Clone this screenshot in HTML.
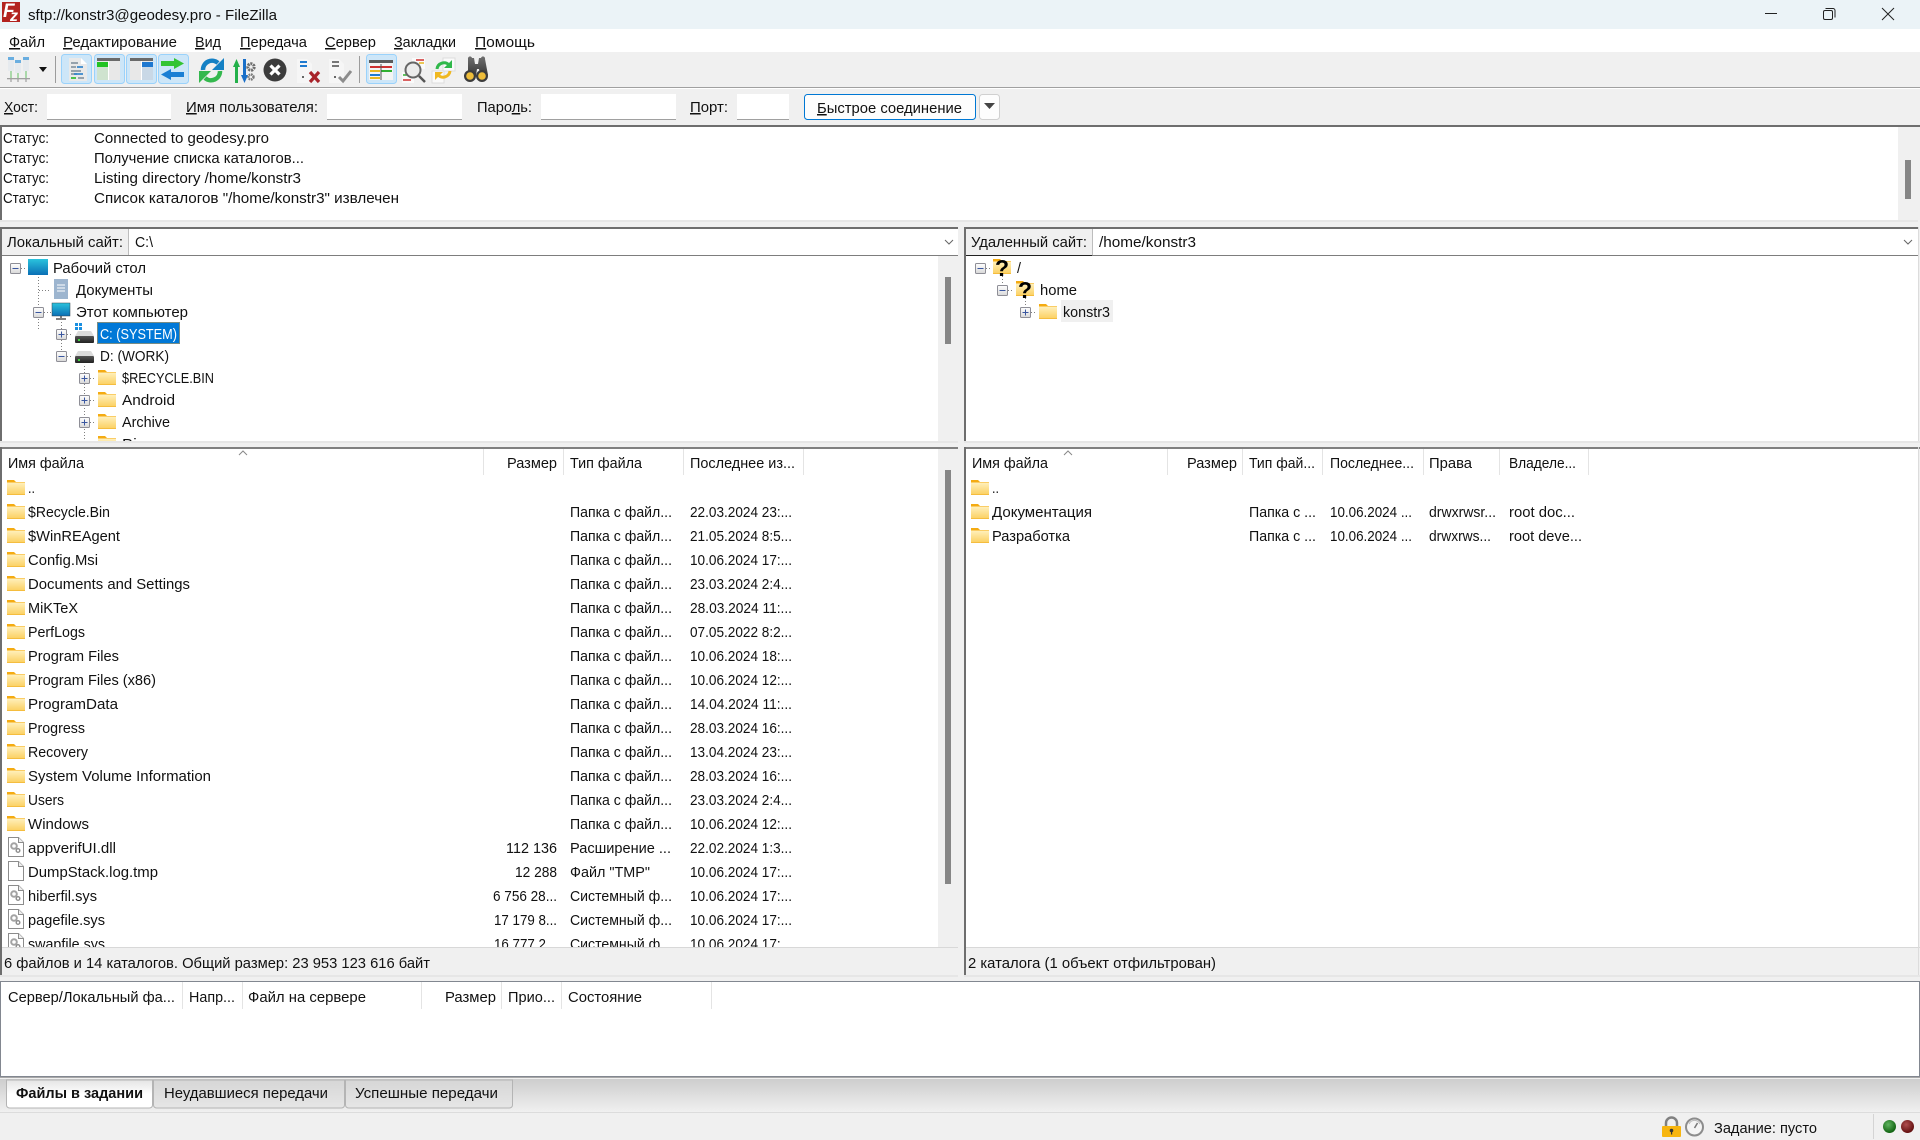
<!DOCTYPE html>
<html lang="ru"><head><meta charset="utf-8"><title>FileZilla</title>
<style>
html,body{margin:0;padding:0;background:#f0f0f0;overflow:hidden}
svg{display:block}
text{font-family:"Liberation Sans","DejaVu Sans",sans-serif;font-size:15px;fill:#111}
.u{text-decoration:underline}
</style></head><body>
<svg width="1920" height="1140" viewBox="0 0 1920 1140" xmlns="http://www.w3.org/2000/svg">
<defs>
<linearGradient id="fg" x1="0" y1="0" x2="0" y2="1"><stop offset="0" stop-color="#fff0bd"/><stop offset="1" stop-color="#fbcf5e"/></linearGradient>
<linearGradient id="ex" x1="0" y1="0" x2="0" y2="1"><stop offset="0" stop-color="#fff"/><stop offset="1" stop-color="#d8d8d8"/></linearGradient>
<linearGradient id="band" x1="0" y1="0" x2="0" y2="1"><stop offset="0" stop-color="#cdcdcd"/><stop offset="1" stop-color="#f0f0f0"/></linearGradient>
<linearGradient id="tabA" x1="0" y1="0" x2="0" y2="1"><stop offset="0" stop-color="#e4e4e4"/><stop offset=".5" stop-color="#fff"/><stop offset="1" stop-color="#fff"/></linearGradient>
<linearGradient id="tabI" x1="0" y1="0" x2="0" y2="1"><stop offset="0" stop-color="#d6d6d6"/><stop offset="1" stop-color="#e6e6e6"/></linearGradient>
<linearGradient id="sc" x1="0" y1="0" x2="0" y2="1"><stop offset="0" stop-color="#2ac3dd"/><stop offset="1" stop-color="#0a6fb5"/></linearGradient>
<linearGradient id="dr" x1="0" y1="0" x2="0" y2="1"><stop offset="0" stop-color="#555"/><stop offset="1" stop-color="#222"/></linearGradient>
<linearGradient id="bn" x1="0" y1="0" x2="0" y2="1"><stop offset="0" stop-color="#707070"/><stop offset="1" stop-color="#3a3a3a"/></linearGradient>
<radialGradient id="gl" cx=".4" cy=".35" r=".7"><stop offset="0" stop-color="#5fb45f"/><stop offset="1" stop-color="#0a5c0a"/></radialGradient>
<radialGradient id="rl" cx=".4" cy=".35" r=".7"><stop offset="0" stop-color="#b05050"/><stop offset="1" stop-color="#5c0a0a"/></radialGradient>
<clipPath id="cT"><rect x="0" y="256" width="938" height="185"/></clipPath>
<clipPath id="cL"><rect x="0" y="449" width="938" height="498"/></clipPath>
<symbol id="fo" width="18" height="15" viewBox="0 0 18 15"><path d="M0 0h7l2 2h9v3H0z" fill="#f4ab12"/><rect y="2.5" width="18" height="12.5" fill="url(#fg)"/><rect y="14" width="18" height="1" fill="#f5bd3e"/></symbol>
<symbol id="fi" width="16" height="20" viewBox="0 0 16 20"><path d="M.5.5h10l5 5v14H.5z" fill="#fff" stroke="#8c8c8c"/><path d="M10.5.5v5h5" fill="#eee" stroke="#8c8c8c"/></symbol>
<symbol id="fg2" width="16" height="20" viewBox="0 0 16 20"><path d="M.5.5h10l5 5v14H.5z" fill="#fff" stroke="#8c8c8c"/><path d="M10.5.5v5h5" fill="#eee" stroke="#8c8c8c"/><circle cx="6" cy="9" r="2.8" fill="none" stroke="#a3a3a3" stroke-width="2"/><circle cx="10" cy="13.5" r="1.8" fill="none" stroke="#8d8d8d" stroke-width="1.4"/></symbol>
<symbol id="em" width="11" height="11" viewBox="0 0 11 11"><rect x=".5" y=".5" width="10" height="10" rx="1" fill="url(#ex)" stroke="#8e8e96"/><path d="M2.5 5.5h6" stroke="#3a57a0"/></symbol>
<symbol id="ep" width="11" height="11" viewBox="0 0 11 11"><rect x=".5" y=".5" width="10" height="10" rx="1" fill="url(#ex)" stroke="#8e8e96"/><path d="M2.5 5.5h6M5.5 2.5v6" stroke="#3a57a0"/></symbol>
<symbol id="dv" width="19" height="12" viewBox="0 0 19 12"><path d="M3 0h13l3 5H0z" fill="#dcdcdc"/><rect y="5" width="19" height="7" rx="1" fill="url(#dr)"/><rect x="3" y="8" width="2" height="2" fill="#3ecf3e"/></symbol>
</defs>

<!-- frame backgrounds -->
<rect width="1920" height="1140" fill="#f0f0f0"/>
<rect width="1920" height="29" fill="#ebf3f7"/>
<rect y="29" width="1920" height="23" fill="#fff"/>
<rect y="87" width="1920" height="1" fill="#a0a0a0"/>
<rect y="88" width="1920" height="1" fill="#fff"/>
<rect y="125" width="1920" height="2" fill="#6e6e6e"/>
<rect y="127" width="1918" height="93" fill="#fff"/>
<rect y="127" width="2" height="93" fill="#6e6e6e"/>
<rect x="1898" y="127" width="20" height="93" fill="#f0f0f0"/>
<rect x="1905" y="160" width="6" height="39" fill="#868686"/>
<rect y="220" width="1918" height="2" fill="#e6e6e6"/>

<!-- title bar -->
<rect x="2" y="2" width="18" height="20" fill="#b3231f"/>
<text x="3" y="17" style="font-size:19px;font-weight:bold;font-style:italic;fill:#fff">F</text>
<text x="10" y="21" style="font-size:16px;font-weight:bold;font-style:italic;fill:#fff">z</text>
<text x="28" y="20" textLength="249" lengthAdjust="spacingAndGlyphs">sftp://konstr3@geodesy.pro - FileZilla</text>
<path d="M1765 13.5h12" stroke="#222" stroke-width="1"/>
<path d="M1825.5 8.5h7.5a2 2 0 0 1 2 2v7" fill="none" stroke="#222"/><rect x="1823.5" y="10.5" width="9" height="9" rx="1.5" fill="none" stroke="#222"/>
<path d="M1882 8l12 12M1894 8l-12 12" stroke="#222"/>

<!-- menu -->
<g>
<text x="9" y="47" textLength="36" lengthAdjust="spacingAndGlyphs"><tspan class="u">Ф</tspan>айл</text>
<text x="63" y="47" textLength="114" lengthAdjust="spacingAndGlyphs"><tspan class="u">Р</tspan>едактирование</text>
<text x="195" y="47" textLength="26" lengthAdjust="spacingAndGlyphs"><tspan class="u">В</tspan>ид</text>
<text x="240" y="47" textLength="67" lengthAdjust="spacingAndGlyphs"><tspan class="u">П</tspan>ередача</text>
<text x="325" y="47" textLength="51" lengthAdjust="spacingAndGlyphs"><tspan class="u">С</tspan>ервер</text>
<text x="394" y="47" textLength="62" lengthAdjust="spacingAndGlyphs"><tspan class="u">З</tspan>акладки</text>
<text x="475" y="47" textLength="60" lengthAdjust="spacingAndGlyphs"><tspan class="u">П</tspan>омощь</text>
</g>

<!-- toolbar -->
<g>
<!-- site manager -->
<rect x="8" y="57" width="6" height="14" fill="#e6eaee"/><rect x="8" y="57" width="6" height="3" fill="#6aaee0"/>
<rect x="15" y="60" width="6" height="13" fill="#e6eaee"/><rect x="15" y="60" width="6" height="3" fill="#6aaee0"/>
<rect x="23" y="57" width="6" height="14" fill="#e6eaee"/><rect x="23" y="57" width="6" height="3" fill="#6aaee0"/>
<path d="M11 71v7M18 73v5M26 71v7" stroke="#7cc87c" stroke-width="1.2"/>
<rect x="7" y="78" width="23" height="1.3" fill="#a0a0a0"/><path d="M11 79v3M18 79v3M26 79v3" stroke="#a0a0a0" stroke-width="1.2"/>
<path d="M39 67h8l-4 5z" fill="#111"/>
<rect x="55" y="56" width="1" height="27" fill="#9c9c9c"/>
<!-- highlighted buttons -->
<rect x="61.500" y="54.500" width="30" height="29" rx="3" fill="#cde6f8" stroke="#9ad2fb"/>
<rect x="94.500" y="54.500" width="30" height="29" rx="3" fill="#cde6f8" stroke="#9ad2fb"/>
<rect x="126.500" y="54.500" width="30" height="29" rx="3" fill="#cde6f8" stroke="#9ad2fb"/>
<rect x="158.500" y="54.500" width="30" height="29" rx="3" fill="#cde6f8" stroke="#9ad2fb"/>
<!-- log doc -->
<path d="M69 58h12l6 6v17H69z" fill="#e9e9e9"/><path d="M81 58v6h6z" fill="#fff"/>
<path d="M71 63h7M71 67h5M71 71h10M71 74h6M78 78h6" stroke="#7a8a98" stroke-width="1.6"/><path d="M77 67h6M74 74h9" stroke="#1a78c8" stroke-width="1.6"/><path d="M71 78h5" stroke="#25b825" stroke-width="1.6"/>
<!-- local tree -->
<rect x="97" y="58" width="23" height="22" fill="#e8e8e8"/><rect x="97" y="58" width="23" height="3" fill="#6a6a6a"/><rect x="97" y="62" width="11" height="5" fill="#22c322"/><rect x="97" y="67" width="11" height="13" fill="#cfe3cf"/><rect x="108" y="61" width="1" height="19" fill="#fff"/>
<!-- remote tree -->
<rect x="130" y="58" width="23" height="22" fill="#e8e8e8"/><rect x="130" y="58" width="23" height="3" fill="#6a6a6a"/><rect x="142" y="62" width="11" height="5" fill="#1e78d0"/><rect x="142" y="67" width="11" height="13" fill="#c9d8e6"/><rect x="141" y="61" width="1" height="19" fill="#fff"/>
<!-- queue arrows -->
<path d="M161 61h13v-3l10 5.500-10 5.500v-3h-13z" fill="#33c433"/>
<path d="M184 72h-13v-3l-10 5.500 10 5.500v-3h13z" fill="#1a7fd4"/>
<!-- refresh -->
<path d="M203 70a9 9 0 0 1 15-7" fill="none" stroke="#1480c4" stroke-width="4.500"/><path d="M224 58v12h-12z" fill="#1480c4"/>
<path d="M220 71a9 9 0 0 1-15 7" fill="none" stroke="#34b84e" stroke-width="4.500"/><path d="M199 83V71h12z" fill="#34b84e"/>
<!-- sync -->
<path d="M233 67l3.500-8 3.500 8h-2v16h-3V67z" fill="#23b04a"/>
<path d="M241 75l3.500 8 3.500-8h-2V59h-3v16z" fill="#1a6fc8"/>
<circle cx="251" cy="67" r="3.200" fill="none" stroke="#6e6e6e" stroke-width="3" stroke-dasharray="2 .8"/><circle cx="251" cy="77" r="2.500" fill="none" stroke="#7c7c7c" stroke-width="2.400" stroke-dasharray="1.600 .7"/>
<!-- cancel -->
<circle cx="275" cy="70" r="11.500" fill="#3c3c3c"/><path d="M270.500 65.500l9 9M279.500 65.500l-9 9" stroke="#fff" stroke-width="3.200"/>
<!-- delete -->
<path d="M297 59h10l5 5v19h-15z" fill="#f6f6f6"/><path d="M300 62h7M300 66h7" stroke="#1f7bd0" stroke-width="2"/><rect x="302" y="76" width="2" height="2" fill="#666"/>
<path d="M310 72l9 10M319 72l-9 10" stroke="#a8232a" stroke-width="3.200"/>
<!-- check -->
<path d="M329 59h10l5 5v19h-15z" fill="#f6f6f6"/><path d="M332 62h7M332 66h7" stroke="#777" stroke-width="2"/><rect x="334" y="76" width="2" height="2" fill="#666"/>
<path d="M339 77l4 4 8-10" fill="none" stroke="#8c8c8c" stroke-width="3"/>
<rect x="359" y="56" width="1" height="27" fill="#9c9c9c"/>
<!-- filter -->
<rect x="366.500" y="54.500" width="30" height="29" rx="3" fill="#cde6f8" stroke="#9ad2fb"/>
<rect x="369" y="60" width="24" height="20" fill="#f4f4f4"/><rect x="369" y="60" width="24" height="3" fill="#5a5a5a"/>
<path d="M370 67h22" stroke="#cf3030" stroke-width="2"/><path d="M370 71h10" stroke="#e8b820" stroke-width="2"/><path d="M381 71h11" stroke="#30b030" stroke-width="2"/><path d="M370 75h10" stroke="#1f7bd0" stroke-width="2"/><path d="M370 78h10" stroke="#e8b820" stroke-width="2"/><path d="M381 64v16" stroke="#555"/>
<!-- search -->
<rect x="412" y="58" width="13" height="11" fill="#fafafa"/><path d="M416 60h8" stroke="#cf3030" stroke-width="1.500"/><path d="M419 63h5" stroke="#e8b820" stroke-width="1.500"/>
<rect x="402" y="72" width="12" height="11" fill="#fafafa"/><path d="M403 75h6" stroke="#30b030" stroke-width="1.500"/><path d="M403 80h8" stroke="#cf3030" stroke-width="1.500"/>
<circle cx="413" cy="70" r="7.500" fill="#ececec" stroke="#666" stroke-width="2"/><path d="M419 76l6 6" stroke="#555" stroke-width="2.500"/>
<!-- sync browse -->
<rect x="443" y="58" width="12" height="13" fill="#fafafa" stroke="#ddd"/><rect x="432" y="71" width="12" height="12" fill="#fafafa" stroke="#ddd"/>
<path d="M437 69a7 7 0 0 1 12-4" fill="none" stroke="#30b84a" stroke-width="3"/><path d="M452 60v8h-8z" fill="#30b84a"/>
<path d="M450 71a7 7 0 0 1-12 4" fill="none" stroke="#f0b820" stroke-width="3"/><path d="M435 80v-8h8z" fill="#f0b820"/>
<!-- binoculars -->
<path d="M468 59a2 2 0 0 1 4-1h2l1 6h3l1-6h2a2 2 0 0 1 4 1l3 16h-8l-1-6h-2l-1 6h-8z" fill="url(#bn)"/>
<circle cx="470" cy="76" r="6" fill="#3c3c3c"/><circle cx="482" cy="76" r="6" fill="#3c3c3c"/>
<circle cx="470" cy="76" r="3.800" fill="#eebd3a"/><circle cx="482" cy="76" r="3.800" fill="#eebd3a"/>
</g>

<!-- quick connect -->
<g>
<text x="4" y="112" textLength="34" lengthAdjust="spacingAndGlyphs"><tspan class="u">Х</tspan>ост:</text>
<rect x="47" y="94" width="124" height="26" fill="#fff"/><rect x="47" y="119" width="124" height="1" fill="#a0a0a0"/>
<text x="186" y="112" textLength="132" lengthAdjust="spacingAndGlyphs"><tspan class="u">И</tspan>мя пользователя:</text>
<rect x="327" y="94" width="135" height="26" fill="#fff"/><rect x="327" y="119" width="135" height="1" fill="#a0a0a0"/>
<text x="477" y="112" textLength="55" lengthAdjust="spacingAndGlyphs">Паро<tspan class="u">л</tspan>ь:</text>
<rect x="541" y="94" width="135" height="26" fill="#fff"/><rect x="541" y="119" width="135" height="1" fill="#a0a0a0"/>
<text x="690" y="112" textLength="38" lengthAdjust="spacingAndGlyphs"><tspan class="u">П</tspan>орт:</text>
<rect x="737" y="94" width="52" height="26" fill="#fff"/><rect x="737" y="119" width="52" height="1" fill="#a0a0a0"/>
<rect x="804.500" y="94.500" width="171" height="25" rx="3" fill="#fdfdfd" stroke="#0078d4"/>
<text x="817" y="113" textLength="145" lengthAdjust="spacingAndGlyphs"><tspan class="u">Б</tspan>ыстрое соединение</text>
<rect x="979.500" y="94.500" width="20" height="25" rx="3" fill="#fdfdfd" stroke="#d0d0d0"/>
<path d="M984 103h11l-5.500 6z" fill="#444"/>
</g>

<!-- log text -->
<g>
<text x="3" y="143" textLength="46" lengthAdjust="spacingAndGlyphs">Статус:</text><text x="94" y="143" textLength="175" lengthAdjust="spacingAndGlyphs">Connected to geodesy.pro</text>
<text x="3" y="163" textLength="46" lengthAdjust="spacingAndGlyphs">Статус:</text><text x="94" y="163" textLength="210" lengthAdjust="spacingAndGlyphs">Получение списка каталогов...</text>
<text x="3" y="183" textLength="46" lengthAdjust="spacingAndGlyphs">Статус:</text><text x="94" y="183" textLength="207" lengthAdjust="spacingAndGlyphs">Listing directory /home/konstr3</text>
<text x="3" y="203" textLength="46" lengthAdjust="spacingAndGlyphs">Статус:</text><text x="94" y="203" textLength="305" lengthAdjust="spacingAndGlyphs">Список каталогов "/home/konstr3" извлечен</text>
</g>

<!-- local panel frame -->
<rect y="227" width="958" height="2" fill="#6e6e6e"/>
<rect y="229" width="958" height="26" fill="#fff"/>
<rect x="2" y="229" width="126" height="26" fill="#f0f0f0"/><rect x="128" y="229" width="1" height="26" fill="#bdbdbd"/>
<rect y="255" width="958" height="1" fill="#7d7d7d"/>
<text x="7" y="247" textLength="116" lengthAdjust="spacingAndGlyphs">Локальный сайт:</text>
<text x="135" y="247" textLength="18" lengthAdjust="spacingAndGlyphs">C:\</text>
<path d="M945 240l4 4 4-4" fill="none" stroke="#666"/>
<rect y="256" width="958" height="185" fill="#fff"/>
<rect x="938" y="256" width="20" height="185" fill="#f0f0f0"/><rect x="945" y="277" width="6" height="67" fill="#868686"/>
<rect y="441" width="958" height="2" fill="#e6e6e6"/>
<rect y="447" width="958" height="2" fill="#808080"/>
<rect y="449" width="958" height="498" fill="#fff"/>
<rect x="938" y="449" width="20" height="498" fill="#f0f0f0"/><rect x="945" y="470" width="6" height="414" fill="#868686"/>
<rect y="947" width="958" height="1" fill="#d8d8d8"/>
<rect y="227" width="2" height="214" fill="#6e6e6e"/><rect y="447" width="2" height="528" fill="#6e6e6e"/>
<rect y="975" width="958" height="2" fill="#e6e6e6"/>

<!-- remote panel frame -->
<rect x="964" y="227" width="954" height="2" fill="#6e6e6e"/>
<rect x="964" y="229" width="954" height="26" fill="#fff"/>
<rect x="966" y="229" width="126" height="26" fill="#f0f0f0"/><rect x="1092" y="229" width="1" height="26" fill="#bdbdbd"/>
<rect x="964" y="255" width="954" height="1" fill="#7d7d7d"/><rect x="966" y="255" width="126" height="1" fill="#222"/>
<text x="971" y="247" textLength="116" lengthAdjust="spacingAndGlyphs">Удаленный сайт:</text>
<text x="1099" y="247" textLength="97" lengthAdjust="spacingAndGlyphs">/home/konstr3</text>
<path d="M1904 240l4 4 4-4" fill="none" stroke="#666"/>
<rect x="964" y="256" width="954" height="185" fill="#fff"/>
<rect x="964" y="441" width="956" height="2" fill="#e6e6e6"/>
<rect x="964" y="447" width="956" height="2" fill="#808080"/>
<rect x="964" y="449" width="954" height="498" fill="#fff"/>
<rect x="964" y="947" width="956" height="1" fill="#d8d8d8"/>
<rect x="964" y="227" width="2" height="214" fill="#6e6e6e"/><rect x="964" y="447" width="2" height="528" fill="#6e6e6e"/>
<rect x="1918" y="227" width="1" height="214" fill="#dcdcdc"/><rect x="1918" y="447" width="1" height="528" fill="#dcdcdc"/>
<rect x="964" y="975" width="956" height="2" fill="#e6e6e6"/>

<!-- local tree -->
<g clip-path="url(#cT)">
<g stroke="#808080" stroke-dasharray="1 2" fill="none">
<path d="M21 268.500h6M38.500 277v53M39 290.500h12M44 312.500h7M61.500 322v36M67 334.500h6M67 356.500h6M84.500 366v78M90 378.500h6M90 400.500h6M90 422.500h6"/>
</g>
<use href="#em" x="10" y="263"/>
<rect x="28" y="259" width="20" height="16" fill="url(#sc)"/>
<text x="53" y="273" textLength="93" lengthAdjust="spacingAndGlyphs">Рабочий стол</text>
<path d="M54 279h14v20H54z" fill="#9db5cf"/><path d="M57 285h8M57 288h8M57 291h8" stroke="#fff"/>
<text x="76" y="295" textLength="77" lengthAdjust="spacingAndGlyphs">Документы</text>
<use href="#em" x="33" y="307"/>
<rect x="52" y="303" width="18" height="13" fill="url(#sc)" stroke="#33424d" stroke-width=".5"/><path d="M61 316v2M56 319h10" stroke="#555" stroke-width="1.500"/>
<text x="76" y="317" textLength="112" lengthAdjust="spacingAndGlyphs">Этот компьютер</text>
<use href="#ep" x="56" y="329"/>
<path d="M75 323h3v3h-3zM79 323h3v3h-3zM75 327h3v3h-3zM79 327h3v3h-3z" fill="#1a8fe0"/>
<use href="#dv" x="75" y="331"/>
<rect x="97" y="322" width="83" height="22" fill="#0078d7"/>
<rect x="97.500" y="322.500" width="82" height="21" fill="none" stroke="#f0a030" stroke-dasharray="1 1"/>
<text x="100" y="339" textLength="77" lengthAdjust="spacingAndGlyphs" style="fill:#fff">C: (SYSTEM)</text>
<use href="#em" x="56" y="351"/>
<use href="#dv" x="75" y="351"/>
<text x="100" y="361" textLength="69" lengthAdjust="spacingAndGlyphs">D: (WORK)</text>
<use href="#ep" x="79" y="373"/><use href="#fo" x="98" y="370"/><text x="122" y="383" textLength="92" lengthAdjust="spacingAndGlyphs">$RECYCLE.BIN</text>
<use href="#ep" x="79" y="395"/><use href="#fo" x="98" y="392"/><text x="122" y="405" textLength="53" lengthAdjust="spacingAndGlyphs">Android</text>
<use href="#ep" x="79" y="417"/><use href="#fo" x="98" y="414"/><text x="122" y="427" textLength="48" lengthAdjust="spacingAndGlyphs">Archive</text>
<use href="#fo" x="98" y="436"/><text x="122" y="449" textLength="24" lengthAdjust="spacingAndGlyphs">Bin</text>
</g>

<!-- remote tree -->
<g>
<g stroke="#808080" stroke-dasharray="1 2" fill="none"><path d="M986 268.500h6M1002.500 276v9M1008 290.500h6M1025.500 298v9M1031 312.500h6"/></g>
<use href="#em" x="975" y="263"/>
<use href="#fo" x="993" y="259"/>
<text x="1002" y="276" text-anchor="middle" style="font-size:23px;font-weight:bold;fill:#000">?</text>
<text x="1017" y="273" textLength="4" lengthAdjust="spacingAndGlyphs">/</text>
<use href="#em" x="997" y="285"/>
<use href="#fo" x="1016" y="281"/>
<text x="1025" y="298" text-anchor="middle" style="font-size:23px;font-weight:bold;fill:#000">?</text>
<text x="1040" y="295" textLength="37" lengthAdjust="spacingAndGlyphs">home</text>
<use href="#ep" x="1020" y="307"/>
<use href="#fo" x="1039" y="304"/>
<rect x="1061" y="300" width="52" height="22" fill="#f0f0f0"/>
<text x="1063" y="317" textLength="47" lengthAdjust="spacingAndGlyphs">konstr3</text>
</g>

<!-- local list header -->
<g fill="#e4e4e4">
<rect x="483" y="449" width="1" height="26"/><rect x="563" y="449" width="1" height="26"/><rect x="683" y="449" width="1" height="26"/><rect x="803" y="449" width="1" height="26"/>
</g>
<path d="M239 455l4-4 4 4" fill="none" stroke="#888"/>
<text x="8" y="468" textLength="76" lengthAdjust="spacingAndGlyphs">Имя файла</text>
<text x="507" y="468" textLength="50" lengthAdjust="spacingAndGlyphs">Размер</text>
<text x="570" y="468" textLength="72" lengthAdjust="spacingAndGlyphs">Тип файла</text>
<text x="690" y="468" textLength="105" lengthAdjust="spacingAndGlyphs">Последнее из...</text>

<!-- local list rows -->
<g clip-path="url(#cL)">
<use href="#fo" x="7" y="480"/><text x="28" y="493" textLength="7" lengthAdjust="spacingAndGlyphs">..</text>
<use href="#fo" x="7" y="504"/><text x="28" y="517" textLength="82" lengthAdjust="spacingAndGlyphs">$Recycle.Bin</text><text x="570" y="517" textLength="102" lengthAdjust="spacingAndGlyphs">Папка с файл...</text><text x="690" y="517" textLength="102" lengthAdjust="spacingAndGlyphs">22.03.2024 23:...</text>
<use href="#fo" x="7" y="528"/><text x="28" y="541" textLength="92" lengthAdjust="spacingAndGlyphs">$WinREAgent</text><text x="570" y="541" textLength="102" lengthAdjust="spacingAndGlyphs">Папка с файл...</text><text x="690" y="541" textLength="102" lengthAdjust="spacingAndGlyphs">21.05.2024 8:5...</text>
<use href="#fo" x="7" y="552"/><text x="28" y="565" textLength="70" lengthAdjust="spacingAndGlyphs">Config.Msi</text><text x="570" y="565" textLength="102" lengthAdjust="spacingAndGlyphs">Папка с файл...</text><text x="690" y="565" textLength="102" lengthAdjust="spacingAndGlyphs">10.06.2024 17:...</text>
<use href="#fo" x="7" y="576"/><text x="28" y="589" textLength="162" lengthAdjust="spacingAndGlyphs">Documents and Settings</text><text x="570" y="589" textLength="102" lengthAdjust="spacingAndGlyphs">Папка с файл...</text><text x="690" y="589" textLength="102" lengthAdjust="spacingAndGlyphs">23.03.2024 2:4...</text>
<use href="#fo" x="7" y="600"/><text x="28" y="613" textLength="50" lengthAdjust="spacingAndGlyphs">MiKTeX</text><text x="570" y="613" textLength="102" lengthAdjust="spacingAndGlyphs">Папка с файл...</text><text x="690" y="613" textLength="102" lengthAdjust="spacingAndGlyphs">28.03.2024 11:...</text>
<use href="#fo" x="7" y="624"/><text x="28" y="637" textLength="57" lengthAdjust="spacingAndGlyphs">PerfLogs</text><text x="570" y="637" textLength="102" lengthAdjust="spacingAndGlyphs">Папка с файл...</text><text x="690" y="637" textLength="102" lengthAdjust="spacingAndGlyphs">07.05.2022 8:2...</text>
<use href="#fo" x="7" y="648"/><text x="28" y="661" textLength="91" lengthAdjust="spacingAndGlyphs">Program Files</text><text x="570" y="661" textLength="102" lengthAdjust="spacingAndGlyphs">Папка с файл...</text><text x="690" y="661" textLength="102" lengthAdjust="spacingAndGlyphs">10.06.2024 18:...</text>
<use href="#fo" x="7" y="672"/><text x="28" y="685" textLength="128" lengthAdjust="spacingAndGlyphs">Program Files (x86)</text><text x="570" y="685" textLength="102" lengthAdjust="spacingAndGlyphs">Папка с файл...</text><text x="690" y="685" textLength="102" lengthAdjust="spacingAndGlyphs">10.06.2024 12:...</text>
<use href="#fo" x="7" y="696"/><text x="28" y="709" textLength="90" lengthAdjust="spacingAndGlyphs">ProgramData</text><text x="570" y="709" textLength="102" lengthAdjust="spacingAndGlyphs">Папка с файл...</text><text x="690" y="709" textLength="102" lengthAdjust="spacingAndGlyphs">14.04.2024 11:...</text>
<use href="#fo" x="7" y="720"/><text x="28" y="733" textLength="57" lengthAdjust="spacingAndGlyphs">Progress</text><text x="570" y="733" textLength="102" lengthAdjust="spacingAndGlyphs">Папка с файл...</text><text x="690" y="733" textLength="102" lengthAdjust="spacingAndGlyphs">28.03.2024 16:...</text>
<use href="#fo" x="7" y="744"/><text x="28" y="757" textLength="60" lengthAdjust="spacingAndGlyphs">Recovery</text><text x="570" y="757" textLength="102" lengthAdjust="spacingAndGlyphs">Папка с файл...</text><text x="690" y="757" textLength="102" lengthAdjust="spacingAndGlyphs">13.04.2024 23:...</text>
<use href="#fo" x="7" y="768"/><text x="28" y="781" textLength="183" lengthAdjust="spacingAndGlyphs">System Volume Information</text><text x="570" y="781" textLength="102" lengthAdjust="spacingAndGlyphs">Папка с файл...</text><text x="690" y="781" textLength="102" lengthAdjust="spacingAndGlyphs">28.03.2024 16:...</text>
<use href="#fo" x="7" y="792"/><text x="28" y="805" textLength="36" lengthAdjust="spacingAndGlyphs">Users</text><text x="570" y="805" textLength="102" lengthAdjust="spacingAndGlyphs">Папка с файл...</text><text x="690" y="805" textLength="102" lengthAdjust="spacingAndGlyphs">23.03.2024 2:4...</text>
<use href="#fo" x="7" y="816"/><text x="28" y="829" textLength="61" lengthAdjust="spacingAndGlyphs">Windows</text><text x="570" y="829" textLength="102" lengthAdjust="spacingAndGlyphs">Папка с файл...</text><text x="690" y="829" textLength="102" lengthAdjust="spacingAndGlyphs">10.06.2024 12:...</text>
<use href="#fg2" x="8" y="837"/><text x="28" y="853" textLength="88" lengthAdjust="spacingAndGlyphs">appverifUI.dll</text><text x="506" y="853" textLength="51" lengthAdjust="spacingAndGlyphs">112 136</text><text x="570" y="853" textLength="101" lengthAdjust="spacingAndGlyphs">Расширение ...</text><text x="690" y="853" textLength="102" lengthAdjust="spacingAndGlyphs">22.02.2024 1:3...</text>
<use href="#fi" x="8" y="861"/><text x="28" y="877" textLength="130" lengthAdjust="spacingAndGlyphs">DumpStack.log.tmp</text><text x="515" y="877" textLength="42" lengthAdjust="spacingAndGlyphs">12 288</text><text x="570" y="877" textLength="80" lengthAdjust="spacingAndGlyphs">Файл "TMP"</text><text x="690" y="877" textLength="102" lengthAdjust="spacingAndGlyphs">10.06.2024 17:...</text>
<use href="#fg2" x="8" y="885"/><text x="28" y="901" textLength="69" lengthAdjust="spacingAndGlyphs">hiberfil.sys</text><text x="493" y="901" textLength="64" lengthAdjust="spacingAndGlyphs">6 756 28...</text><text x="570" y="901" textLength="102" lengthAdjust="spacingAndGlyphs">Системный ф...</text><text x="690" y="901" textLength="102" lengthAdjust="spacingAndGlyphs">10.06.2024 17:...</text>
<use href="#fg2" x="8" y="909"/><text x="28" y="925" textLength="77" lengthAdjust="spacingAndGlyphs">pagefile.sys</text><text x="494" y="925" textLength="63" lengthAdjust="spacingAndGlyphs">17 179 8...</text><text x="570" y="925" textLength="102" lengthAdjust="spacingAndGlyphs">Системный ф...</text><text x="690" y="925" textLength="102" lengthAdjust="spacingAndGlyphs">10.06.2024 17:...</text>
<use href="#fg2" x="8" y="933"/><text x="28" y="949" textLength="77" lengthAdjust="spacingAndGlyphs">swapfile.sys</text><text x="494" y="949" textLength="63" lengthAdjust="spacingAndGlyphs">16 777 2...</text><text x="570" y="949" textLength="102" lengthAdjust="spacingAndGlyphs">Системный ф...</text><text x="690" y="949" textLength="102" lengthAdjust="spacingAndGlyphs">10.06.2024 17:...</text>
</g>

<!-- remote list -->
<g fill="#e4e4e4">
<rect x="1167" y="449" width="1" height="26"/><rect x="1242" y="449" width="1" height="26"/><rect x="1322" y="449" width="1" height="26"/><rect x="1423" y="449" width="1" height="26"/><rect x="1499" y="449" width="1" height="26"/><rect x="1588" y="449" width="1" height="26"/>
</g>
<path d="M1064 455l4-4 4 4" fill="none" stroke="#888"/>
<text x="972" y="468" textLength="76" lengthAdjust="spacingAndGlyphs">Имя файла</text>
<text x="1187" y="468" textLength="50" lengthAdjust="spacingAndGlyphs">Размер</text>
<text x="1249" y="468" textLength="66" lengthAdjust="spacingAndGlyphs">Тип фай...</text>
<text x="1330" y="468" textLength="84" lengthAdjust="spacingAndGlyphs">Последнее...</text>
<text x="1429" y="468" textLength="43" lengthAdjust="spacingAndGlyphs">Права</text>
<text x="1509" y="468" textLength="67" lengthAdjust="spacingAndGlyphs">Владеле...</text>
<use href="#fo" x="971" y="480"/><text x="992" y="493" textLength="7" lengthAdjust="spacingAndGlyphs">..</text>
<use href="#fo" x="971" y="504"/><text x="992" y="517" textLength="100" lengthAdjust="spacingAndGlyphs">Документация</text><text x="1249" y="517" textLength="67" lengthAdjust="spacingAndGlyphs">Папка с ...</text><text x="1330" y="517" textLength="82" lengthAdjust="spacingAndGlyphs">10.06.2024 ...</text><text x="1429" y="517" textLength="67" lengthAdjust="spacingAndGlyphs">drwxrwsr...</text><text x="1509" y="517" textLength="66" lengthAdjust="spacingAndGlyphs">root doc...</text>
<use href="#fo" x="971" y="528"/><text x="992" y="541" textLength="78" lengthAdjust="spacingAndGlyphs">Разработка</text><text x="1249" y="541" textLength="67" lengthAdjust="spacingAndGlyphs">Папка с ...</text><text x="1330" y="541" textLength="82" lengthAdjust="spacingAndGlyphs">10.06.2024 ...</text><text x="1429" y="541" textLength="62" lengthAdjust="spacingAndGlyphs">drwxrws...</text><text x="1509" y="541" textLength="73" lengthAdjust="spacingAndGlyphs">root deve...</text>

<!-- list status -->
<text x="4" y="968" textLength="426" lengthAdjust="spacingAndGlyphs">6 файлов и 14 каталогов. Общий размер: 23 953 123 616 байт</text>
<text x="968" y="968" textLength="248" lengthAdjust="spacingAndGlyphs">2 каталога (1 объект отфильтрован)</text>

<!-- queue -->
<rect x=".5" y="981.500" width="1919" height="95" fill="#fff" stroke="#828790"/>
<rect x="0" y="1077" width="1920" height="1" fill="#a8a8a8"/>
<g fill="#e4e4e4">
<rect x="182" y="982" width="1" height="27"/><rect x="242" y="982" width="1" height="27"/><rect x="421" y="982" width="1" height="27"/><rect x="501" y="982" width="1" height="27"/><rect x="561" y="982" width="1" height="27"/><rect x="711" y="982" width="1" height="27"/>
</g>
<text x="8" y="1002" textLength="167" lengthAdjust="spacingAndGlyphs">Сервер/Локальный фа...</text>
<text x="189" y="1002" textLength="46" lengthAdjust="spacingAndGlyphs">Напр...</text>
<text x="248" y="1002" textLength="118" lengthAdjust="spacingAndGlyphs">Файл на сервере</text>
<text x="445" y="1002" textLength="51" lengthAdjust="spacingAndGlyphs">Размер</text>
<text x="508" y="1002" textLength="47" lengthAdjust="spacingAndGlyphs">Прио...</text>
<text x="568" y="1002" textLength="74" lengthAdjust="spacingAndGlyphs">Состояние</text>

<!-- tabs band -->
<rect y="1079" width="1920" height="33" fill="url(#band)"/>
<rect y="1112" width="1920" height="1" fill="#dcdcdc"/>
<path d="M6.500 1080v25a3 3 0 0 0 3 3h140a3 3 0 0 0 3-3v-25z" fill="url(#tabA)" stroke="#b4b4b4"/>
<path d="M153.500 1080v25a3 3 0 0 0 3 3h185a3 3 0 0 0 3-3v-25z" fill="url(#tabI)" stroke="#b4b4b4"/>
<path d="M345.500 1080v25a3 3 0 0 0 3 3h161a3 3 0 0 0 3-3v-25z" fill="url(#tabI)" stroke="#b4b4b4"/>
<text x="16" y="1098" textLength="127" lengthAdjust="spacingAndGlyphs" style="font-weight:bold">Файлы в задании</text>
<text x="164" y="1098" textLength="164" lengthAdjust="spacingAndGlyphs">Неудавшиеся передачи</text>
<text x="355" y="1098" textLength="143" lengthAdjust="spacingAndGlyphs">Успешные передачи</text>

<!-- status bar -->
<path d="M1666 1127v-4a5.500 5.500 0 0 1 11 0v4" fill="none" stroke="#808080" stroke-width="2.500"/>
<rect x="1662" y="1126" width="19" height="11" rx="1" fill="#f7b50f"/><circle cx="1671.500" cy="1130.500" r="1.800" fill="#333"/><rect x="1671" y="1131" width="1.200" height="3.500" fill="#333"/>
<circle cx="1694.500" cy="1127" r="8.500" fill="#f4f4f4" stroke="#8c8c8c" stroke-width="2"/><path d="M1694.500 1128l3-5" stroke="#777" stroke-width="1.500"/><path d="M1689 1124a6 6 0 0 1 11 0" fill="none" stroke="#bbb"/>
<text x="1714" y="1133" textLength="103" lengthAdjust="spacingAndGlyphs">Задание: пусто</text>
<rect x="1873" y="1114" width="1" height="25" fill="#d4d4d4"/>
<circle cx="1889.500" cy="1126.500" r="6.500" fill="url(#gl)"/>
<circle cx="1907.500" cy="1126.500" r="6.500" fill="url(#rl)"/>
</svg>
</body></html>
